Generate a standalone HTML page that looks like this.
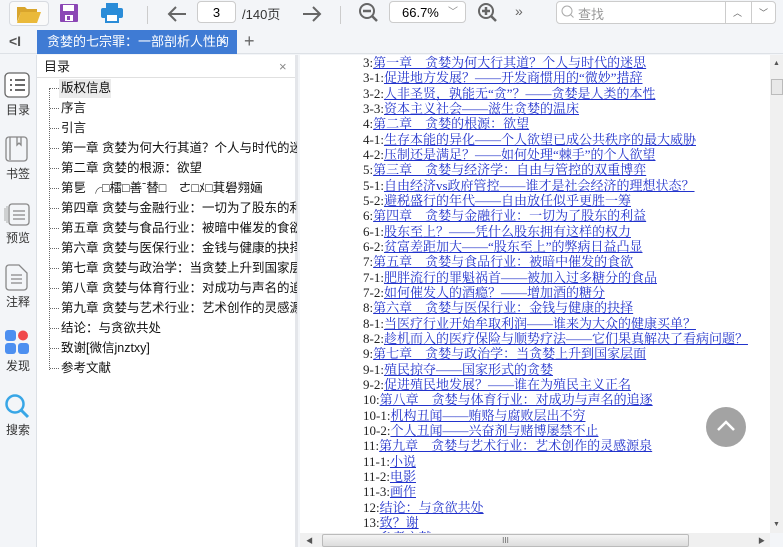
<!DOCTYPE html>
<html><head><meta charset="utf-8"><style>
*{margin:0;padding:0;box-sizing:border-box}
body{width:783px;height:547px;overflow:hidden;background:#f3f5f8;font-family:"Liberation Sans","Noto Sans CJK SC",sans-serif;position:relative}
.abs{position:absolute}
#tb{left:0;top:0;width:783px;height:30px;background:#f3f5f8}
#tabs{left:0;top:30px;width:783px;height:24px;background:#f3f5f8;border-bottom:1px solid #dde1e6}
#tab{left:37px;top:30px;width:200px;height:24px;background:#3f7bd4;color:#fff;font-size:13px;line-height:24px;padding-left:10px;white-space:nowrap;overflow:hidden}
#side{left:0;top:55px;width:37px;height:492px;background:#f3f5f8;border-right:1px solid #dde1e6}
.sl{position:absolute;left:0;width:36px;text-align:center;font-size:12px;color:#333}
#toc{left:37px;top:55px;width:261px;height:492px;background:#fff;border-right:3px solid #e4e6ea}
#toch{left:37px;top:55px;width:258px;height:23px;border-bottom:1px solid #e0e0e0;font-size:13px;line-height:23px;padding-left:7px;color:#222}
.ti{position:absolute;left:61px;font-size:12.5px;color:#111;white-space:nowrap;width:236px;overflow:hidden;height:18px;line-height:18px}
#content{left:300px;top:55px;width:470px;height:478px;background:#fff;overflow:hidden}
.cl{position:absolute;left:63px;font-family:"Liberation Serif","Noto Serif CJK SC",serif;font-size:13px;color:#222;white-space:nowrap;line-height:15px}
.cl a{color:#2233cc;text-decoration:underline}
#vs{left:770px;top:55px;width:13px;height:478px;background:#f0f0f0}
#hs{left:300px;top:533px;width:470px;height:14px;background:#f0f0f0}
</style></head><body>
<div id="tb" class="abs"></div>
<div class="abs" style="left:9px;top:1px;width:40px;height:25px;border:1px solid #d8dbe0;border-radius:4px;background:#fafafa"></div>
<svg class="abs" style="left:16px;top:4px" width="26" height="20"><path d="M1 3h8l2 2h10v3H5L1 18z" fill="#d9a52c"/><path d="M5 8h20l-4 11H1z" fill="#eab93a"/></svg>
<svg class="abs" style="left:59px;top:3px" width="20" height="20"><rect x="1" y="1" width="18" height="18" rx="1" fill="#8b47b5"/><rect x="4" y="2" width="11" height="6" fill="#fff"/><rect x="6" y="12" width="8" height="6" fill="#fff"/><rect x="8" y="13" width="3" height="4" fill="#8b47b5"/></svg>
<svg class="abs" style="left:101px;top:3px" width="22" height="20"><rect x="5" y="0" width="12" height="5" fill="#2a8cd8"/><rect x="0" y="5" width="22" height="10" rx="2" fill="#2a8cd8"/><rect x="5" y="11" width="12" height="8" fill="#fff" stroke="#2a8cd8" stroke-width="2"/></svg>
<div class="abs" style="left:147px;top:6px;width:1px;height:18px;background:#ccc"></div>
<svg class="abs" style="left:166px;top:4px" width="22" height="20"><path d="M20 10H3M10 3L3 10l7 7" stroke="#666" stroke-width="2" fill="none"/></svg>
<div class="abs" style="left:197px;top:1px;width:39px;height:22px;border:1px solid #ccc;border-radius:4px;background:#fff;text-align:center;font-size:13px;line-height:21px">3</div>
<div class="abs" style="left:242px;top:4px;font-size:13px;color:#333">/140页</div>
<svg class="abs" style="left:301px;top:4px" width="22" height="20"><path d="M2 10h17M12 3l7 7-7 7" stroke="#666" stroke-width="2" fill="none"/></svg>
<div class="abs" style="left:340px;top:6px;width:1px;height:18px;background:#ccc"></div>
<svg class="abs" style="left:358px;top:2px" width="22" height="22"><circle cx="9" cy="9" r="7" stroke="#666" stroke-width="2" fill="none"/><path d="M5 9h8M14 14l5 5" stroke="#666" stroke-width="2.5"/></svg>
<div class="abs" style="left:389px;top:1px;width:77px;height:22px;border:1px solid #ccc;border-radius:4px;background:#fff;font-size:13px;line-height:21px;padding-left:12px">66.7%<span style="position:absolute;left:58px;color:#888;font-size:10px">﹀</span></div>
<svg class="abs" style="left:477px;top:2px" width="22" height="22"><circle cx="9" cy="9" r="7" stroke="#666" stroke-width="2" fill="none"/><path d="M5 9h8M9 5v8M14 14l5 5" stroke="#666" stroke-width="2.5"/></svg>
<div class="abs" style="left:515px;top:3px;color:#666;font-size:14px">»</div>
<div class="abs" style="left:556px;top:1px;width:220px;height:23px;border:1px solid #ccc;border-radius:4px;background:#fff"></div>
<div class="abs" style="left:725px;top:1px;width:1px;height:23px;background:#ccc"></div>
<div class="abs" style="left:751px;top:1px;width:1px;height:23px;background:#ccc"></div>
<svg class="abs" style="left:561px;top:5px" width="14" height="14"><circle cx="6" cy="6" r="5" stroke="#aaa" fill="none"/><path d="M9.5 9.5l3 3" stroke="#aaa"/></svg>
<div class="abs" style="left:578px;top:4px;font-size:13px;color:#999">查找</div>
<div class="abs" style="left:733px;top:6px;font-size:9px;color:#666">︿</div>
<div class="abs" style="left:759px;top:6px;font-size:9px;color:#666">﹀</div>

<div id="tabs" class="abs"></div>
<div class="abs" style="left:9px;top:33px;font-size:14px;color:#555;font-weight:bold">&lt;I</div>
<div id="tab" class="abs">贪婪的七宗罪：一部剖析人性的<span style="position:absolute;left:182px">×</span></div>
<div class="abs" style="left:244px;top:31px;font-size:18px;color:#666">+</div>

<div id="side" class="abs"></div>
<svg class="abs" style="left:4px;top:72px" width="26" height="27"><rect x="1" y="1" width="24" height="24" rx="4" fill="#fff" stroke="#666" stroke-width="1.3"/><path d="M6 8h2M11 8h10M6 13h2M11 13h10M6 18h2M11 18h10" stroke="#555" stroke-width="1.8"/></svg>
<div class="sl" style="top:101px">目录</div>
<svg class="abs" style="left:5px;top:136px" width="24" height="26"><rect x="1" y="1" width="21" height="24" rx="3" fill="none" stroke="#888" stroke-width="1.3"/><path d="M5 1v23M12 1v8l2-2 2 2V1" stroke="#888" stroke-width="1.3" fill="none"/></svg>
<div class="sl" style="top:165px">书签</div>
<svg class="abs" style="left:4px;top:200px" width="26" height="26"><rect x="5" y="4" width="20" height="21" rx="3" fill="none" stroke="#888" stroke-width="1.3"/><path d="M3 6v17M1 8v13" stroke="#aaa"/><path d="M9 11h12M9 15h12M9 19h12" stroke="#888" stroke-width="1.3"/></svg>
<div class="sl" style="top:229px">预览</div>
<svg class="abs" style="left:5px;top:264px" width="24" height="27"><path d="M1 4a3 3 0 0 1 3-3h10l8 8v14a3 3 0 0 1-3 3H4a3 3 0 0 1-3-3z" fill="none" stroke="#888" stroke-width="1.3"/><path d="M6 11h11M6 15h11M6 19h11" stroke="#888" stroke-width="1.3"/></svg>
<div class="sl" style="top:293px">注释</div>
<svg class="abs" style="left:4px;top:329px" width="26" height="26"><rect x="1" y="1" width="11" height="11" rx="3" fill="#4c8ff0"/><circle cx="19" cy="6.5" r="5" fill="#f0494c"/><rect x="1" y="14" width="11" height="11" rx="3" fill="#4c8ff0"/><rect x="14" y="14" width="11" height="11" rx="3" fill="#4c8ff0"/></svg>
<div class="sl" style="top:357px">发现</div>
<svg class="abs" style="left:4px;top:393px" width="26" height="26"><circle cx="11" cy="11" r="8.5" stroke="#38a6e6" stroke-width="2.5" fill="none"/><path d="M17 17l7 7" stroke="#38a6e6" stroke-width="3"/></svg>
<div class="sl" style="top:421px">搜索</div>

<div id="toc" class="abs"></div>
<div id="toch" class="abs">目录<span style="position:absolute;left:242px;color:#888">×</span></div>
<div class="abs" style="left:49px;top:88px;width:1px;height:282px;border-left:1px dotted #666"></div>
<div class="abs" style="left:59px;top:79px;width:52px;height:19px;background:#ebebeb"></div>
<div class="ti" style="top:79px">版权信息</div>
<div class="ti" style="top:99px">序言</div>
<div class="ti" style="top:119px">引言</div>
<div class="ti" style="top:139px">第一章 贪婪为何大行其道？个人与时代的迷思</div>
<div class="ti" style="top:159px">第二章 贪婪的根源：欲望</div>
<div class="ti" style="top:179px">第乬 ╭□檑□善ˉ替□　ㄜ□ﾒ□萁礐翙婳</div>
<div class="ti" style="top:199px">第四章 贪婪与金融行业：一切为了股东的利益</div>
<div class="ti" style="top:219px">第五章 贪婪与食品行业：被暗中催发的食欲</div>
<div class="ti" style="top:239px">第六章 贪婪与医保行业：金钱与健康的抉择</div>
<div class="ti" style="top:259px">第七章 贪婪与政治学：当贪婪上升到国家层面</div>
<div class="ti" style="top:279px">第八章 贪婪与体育行业：对成功与声名的追逐</div>
<div class="ti" style="top:299px">第九章 贪婪与艺术行业：艺术创作的灵感源泉</div>
<div class="ti" style="top:319px">结论：与贪欲共处</div>
<div class="ti" style="top:339px">致谢[微信jnztxy]</div>
<div class="ti" style="top:359px">参考文献</div>
<svg class="abs" style="left:50px;top:88px" width="9" height="283"><g stroke="#666" stroke-dasharray="1 1"><path d="M0 .5h9M0 20.5h9M0 40.5h9M0 60.5h9M0 80.5h9M0 100.5h9M0 120.5h9M0 140.5h9M0 160.5h9M0 180.5h9M0 200.5h9M0 220.5h9M0 240.5h9M0 260.5h9M0 280.5h9"/></g></svg>

<div id="content" class="abs">
<div class="cl" style="top:0px">3:<a>第一章　贪婪为何大行其道？个人与时代的迷思</a></div>
<div class="cl" style="top:15.3px">3-1:<a>促进地方发展？——开发商惯用的“微妙”措辞</a></div>
<div class="cl" style="top:30.7px">3-2:<a>人非圣贤，孰能无“贪”？——贪婪是人类的本性</a></div>
<div class="cl" style="top:46px">3-3:<a>资本主义社会——滋生贪婪的温床</a></div>
<div class="cl" style="top:61.3px">4:<a>第二章　贪婪的根源：欲望</a></div>
<div class="cl" style="top:76.7px">4-1:<a>生存本能的异化——个人欲望已成公共秩序的最大威胁</a></div>
<div class="cl" style="top:92px">4-2:<a>压制还是满足？——如何处理“棘手”的个人欲望</a></div>
<div class="cl" style="top:107.3px">5:<a>第三章　贪婪与经济学：自由与管控的双重博弈</a></div>
<div class="cl" style="top:122.7px">5-1:<a>自由经济vs政府管控——谁才是社会经济的理想状态？</a></div>
<div class="cl" style="top:138px">5-2:<a>避税盛行的年代——自由放任似乎更胜一筹</a></div>
<div class="cl" style="top:153.3px">6:<a>第四章　贪婪与金融行业：一切为了股东的利益</a></div>
<div class="cl" style="top:168.7px">6-1:<a>股东至上？——凭什么股东拥有这样的权力</a></div>
<div class="cl" style="top:184px">6-2:<a>贫富差距加大——“股东至上”的弊病日益凸显</a></div>
<div class="cl" style="top:199.3px">7:<a>第五章　贪婪与食品行业：被暗中催发的食欲</a></div>
<div class="cl" style="top:214.7px">7-1:<a>肥胖流行的罪魁祸首——被加入过多糖分的食品</a></div>
<div class="cl" style="top:230px">7-2:<a>如何催发人的酒瘾？——增加酒的糖分</a></div>
<div class="cl" style="top:245.3px">8:<a>第六章　贪婪与医保行业：金钱与健康的抉择</a></div>
<div class="cl" style="top:260.7px">8-1:<a>当医疗行业开始牟取利润——谁来为大众的健康买单？</a></div>
<div class="cl" style="top:276px">8-2:<a>趁机而入的医疗保险与顺势疗法——它们果真解决了看病问题？</a></div>
<div class="cl" style="top:291.3px">9:<a>第七章　贪婪与政治学：当贪婪上升到国家层面</a></div>
<div class="cl" style="top:306.7px">9-1:<a>殖民掠夺——国家形式的贪婪</a></div>
<div class="cl" style="top:322px">9-2:<a>促进殖民地发展？——谁在为殖民主义正名</a></div>
<div class="cl" style="top:337.3px">10:<a>第八章　贪婪与体育行业：对成功与声名的追逐</a></div>
<div class="cl" style="top:352.7px">10-1:<a>机构丑闻——贿赂与腐败层出不穷</a></div>
<div class="cl" style="top:368px">10-2:<a>个人丑闻——兴奋剂与赌博屡禁不止</a></div>
<div class="cl" style="top:383.3px">11:<a>第九章　贪婪与艺术行业：艺术创作的灵感源泉</a></div>
<div class="cl" style="top:398.7px">11-1:<a>小说</a></div>
<div class="cl" style="top:414px">11-2:<a>电影</a></div>
<div class="cl" style="top:429.3px">11-3:<a>画作</a></div>
<div class="cl" style="top:444.7px">12:<a>结论：与贪欲共处</a></div>
<div class="cl" style="top:460px">13:<a>致？谢</a></div>
<div class="cl" style="top:475.3px">14:<a>参考文献</a></div>
</div>
<div class="abs" style="left:706px;top:407px;width:40px;height:40px;border-radius:50%;background:#a3a3a3"></div>
<svg class="abs" style="left:706px;top:407px" width="40" height="40"><path d="M12 23l8-8 8 8" stroke="#fff" stroke-width="2.5" fill="none"/></svg>

<div id="vs" class="abs"></div>
<div class="abs" style="left:773px;top:60px;font-size:7px;color:#555">▲</div>
<div class="abs" style="left:771px;top:79px;width:12px;height:16px;background:#e8e8e8;border:1px solid #bbb"></div>
<div class="abs" style="left:773px;top:521px;font-size:7px;color:#555">▼</div>
<div id="hs" class="abs"></div>
<div class="abs" style="left:306px;top:536px;font-size:7px;color:#555">◀</div>
<div class="abs" style="left:322px;top:534px;width:367px;height:13px;background:linear-gradient(#f4f4f4,#ddd);border:1px solid #bbb;border-radius:2px;text-align:center;font-size:8px;line-height:11px;color:#666">III</div>
<div class="abs" style="left:758px;top:536px;font-size:7px;color:#555">▶</div>
</body></html>
